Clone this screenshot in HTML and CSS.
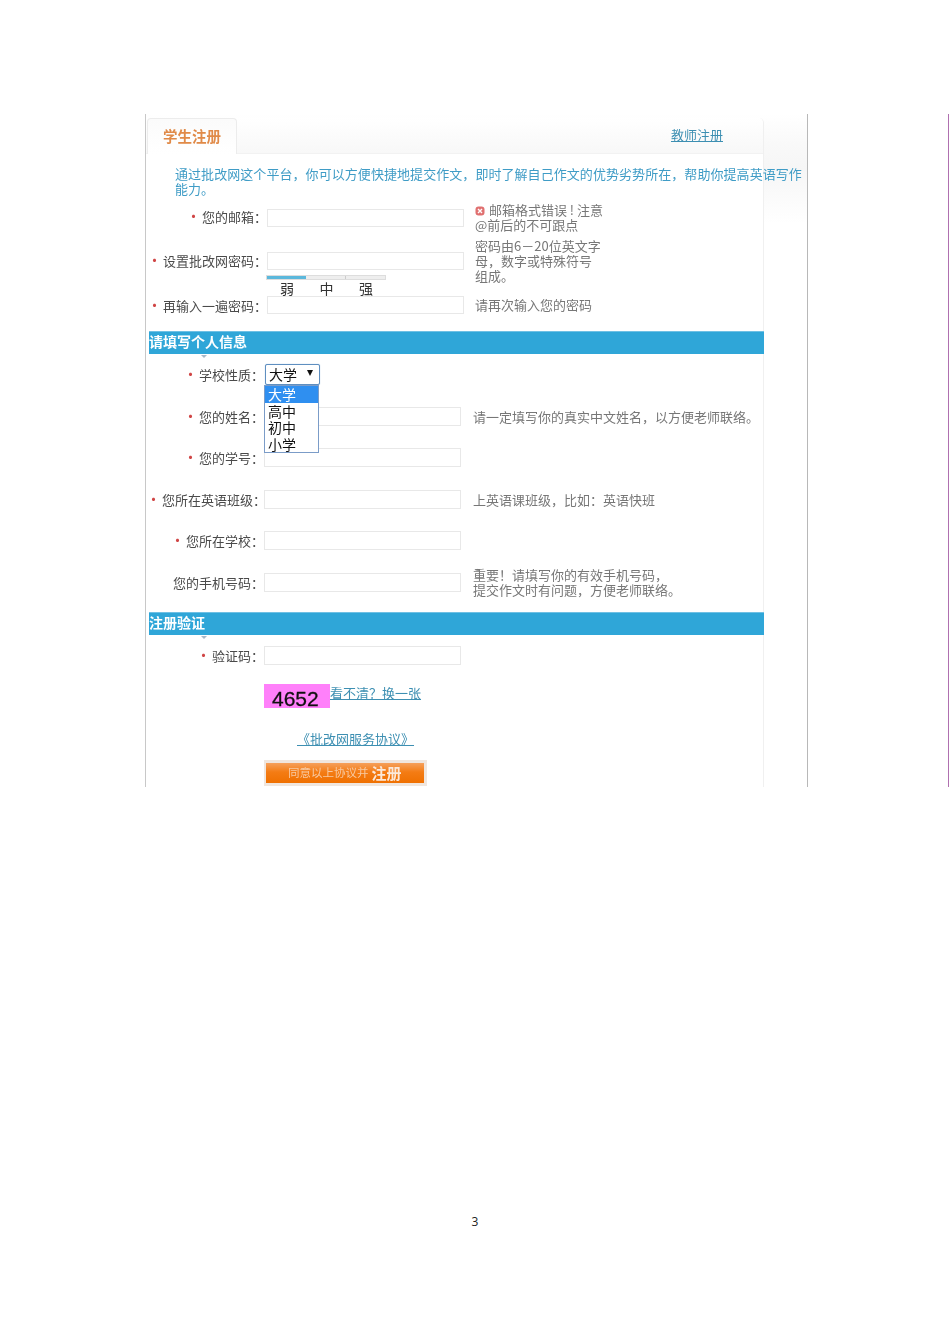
FILE: index.html
```html
<!DOCTYPE html>
<html lang="zh-CN">
<head>
<meta charset="utf-8">
<title>学生注册</title>
<link rel="stylesheet" href="styles.css">
</head>
<body>
<div class="page">
  <div class="sheet">
    <div class="shot">
      <div class="card">
        <div class="tabs">
          <div class="tab">学生注册</div>
          <a class="teacher" href="#">教师注册</a>
        </div>
        <p class="intro">通过批改网这个平台，你可以方便快捷地提交作文，即时了解自己作文的优势劣势所在，帮助你提高英语写作能力。</p>

        <div class="group-a">
          <div class="row-a row-email">
            <label class="lab"><i class="dot">•</i>您的邮箱：</label>
            <div class="inp"></div>
            <div class="hint"><svg class="err" viewBox="0 0 10 10" width="10" height="10"><rect x="0.5" y="0.5" width="9" height="9" rx="3" fill="#e07070"/><path d="M3 3l4 4M7 3l-4 4" stroke="#fff" stroke-width="1.4"/></svg> 邮箱格式错误 ! 注意<br>@前后的不可跟点</div>
          </div>
          <div class="row-a row-pass">
            <label class="lab lab-pass"><i class="dot">•</i>设置批改网密码：</label>
            <div class="field-pass">
              <div class="inp"></div>
              <div class="meter"><span class="m m-on"></span><span class="m"></span><span class="m"></span></div>
              <div class="levels"><span>弱</span><span>中</span><span>强</span></div>
            </div>
            <div class="hint">密码由6－20位英文字<br>母，数字或特殊符号<br>组成。</div>
          </div>
          <div class="row-a row-again">
            <label class="lab"><i class="dot">•</i>再输入一遍密码：</label>
            <div class="inp"></div>
            <div class="hint">请再次输入您的密码</div>
          </div>
        </div>

        <h3 class="bar bar-one">请填写个人信息</h3>

        <div class="group-b">
          <div class="row-b">
            <label class="lab"><i class="dot">•</i>学校性质：</label>
            <div class="select-wrap">
              <div class="select"><span>大学</span><b class="caret"></b></div>
              <ul class="options">
                <li class="sel">大学</li>
                <li>高中</li>
                <li>初中</li>
                <li>小学</li>
              </ul>
            </div>
          </div>
          <div class="row-b">
            <label class="lab"><i class="dot">•</i>您的姓名：</label>
            <div class="inp"></div>
            <div class="hint">请一定填写你的真实中文姓名，以方便老师联络。</div>
          </div>
          <div class="row-b">
            <label class="lab"><i class="dot">•</i>您的学号：</label>
            <div class="inp"></div>
          </div>
          <div class="row-b">
            <label class="lab"><i class="dot">•</i>您所在英语班级：</label>
            <div class="inp"></div>
            <div class="hint">上英语课班级，比如：英语快班</div>
          </div>
          <div class="row-b">
            <label class="lab"><i class="dot">•</i>您所在学校：</label>
            <div class="inp"></div>
          </div>
          <div class="row-b">
            <label class="lab">您的手机号码：</label>
            <div class="inp"></div>
            <div class="hint">重要！请填写你的有效手机号码，<br>提交作文时有问题，方便老师联络。</div>
          </div>
        </div>

        <h3 class="bar bar-two">注册验证</h3>

        <div class="row-b">
          <label class="lab"><i class="dot">•</i>验证码：</label>
          <div class="inp"></div>
        </div>

        <div class="captcha-row">
          <div class="captcha">4652</div>
          <a class="link" href="#">看不清？换一张</a>
        </div>
        <div class="agree-row"><a class="link agree" href="#">《批改网服务协议》</a></div>
        <div class="btn-wrap"><div class="btn"><span class="btn-small">同意以上协议并</span><span class="btn-big">注册</span></div></div>
      </div>
    </div>
    <div class="edge"></div>
  </div>
  <div class="pagenum">3</div>
</div>
</body>
</html>
```
FILE: styles.css
```css
* { box-sizing: border-box; }
html, body { margin: 0; padding: 0; background: #fff; }
body { font-family: "Noto Sans CJK SC", "Liberation Sans", sans-serif; font-size: 13px; line-height: 15px; color: #4a4a4a; }
.page { width: 950px; height: 1344px; padding-top: 114px; }
.sheet { display: flex; padding-left: 145px; }
.shot {
  width: 663px; height: 673px; overflow: hidden;
  border-left: 1px solid #c8c8c8; border-right: 1px solid #b8b8b8;
  background: linear-gradient(#fff, #f9f9f9 30px, #f6f6f6 55px, #fff 110px);
  filter: blur(0.3px);
}
.edge { width: 1px; height: 673px; margin-left: 140px; background: #b070b0; }
.card { width: 618px; height: 673px; margin-top: 4px; background: #fff; border-right: 1px solid #f0f0f0; border-top-right-radius: 5px; }
.tabs {
  height: 36px; display: flex; justify-content: space-between; align-items: center;
  padding-right: 40px; background: linear-gradient(#fff, #f8f8f8);
  border-bottom: 1px solid #f2f2f2; border-top-right-radius: 5px;
}
.tab {
  width: 90px; height: 36px; margin-left: 1px; padding: 9px 0 0 15px;
  font-size: 14.5px; font-weight: 700; color: #e08a48;
  background: linear-gradient(#fbfbfb, #fff);
  border: 1px solid #ececec; border-bottom: 0; border-radius: 4px 4px 0 0;
}
.teacher { color: #3d8fb2; text-decoration: underline; margin-top: -2px; }
.intro { width: 632px; margin: 12px 0 0 29px; color: #3f9cc6; letter-spacing: 0.06px; }
.group-a { margin-top: 7px; }
.row-a { display: grid; grid-template-columns: 121px 197px auto; align-items: center; }
.row-a .hint { margin-left: 11px; }
.row-email { height: 30px; }
.row-email .lab { margin-top: -3px; }
.row-email .hint { margin-top: -3px; }
.row-pass { height: 57px; align-items: start; margin-top: 6px; }
.row-pass .hint { margin-top: -1px; }
.row-again { height: 18px; }
.row-again .hint { margin-top: -2px; }
.lab { text-align: right; white-space: nowrap; color: #4a4a4a; }
.lab-pass { margin-top: 14px; }
.dot { font-style: normal; color: #d04545; font-size: 15px; line-height: 0; margin-right: 1px; }
.inp { height: 18px; background: #fff; border: 1px solid #e8e8e8; }
.field-pass { padding-top: 13px; }
.meter { display: flex; width: 120px; height: 5px; margin: 5px 0 0 -1px; background: #eee; border: 1px solid #ddd; }
.m { flex: 1; border-right: 1px solid #ccc; }
.m:last-child { border-right: 0; }
.m-on { background: #5bb8dc; border-right: 0; }
.levels { display: flex; margin-top: 1px; padding-left: 13px; height: 15px; font-size: 14px; color: #333; }
.levels span { flex: 0 0 39.5px; }
.hint { color: #777; white-space: nowrap; }
.err { vertical-align: -1px; margin-right: 1px; }
.bar { width: 615px; height: 23px; margin: 17px 0 0 3px; position: relative; background: #2fa6d8; color: #fff; font-size: 14px; line-height: 19px; font-weight: 700; border-top: 1px solid #6fc0e4; }
.bar::after { content: ""; position: absolute; left: 52px; top: 23px; border: 3px solid transparent; border-top-color: #a8b8c8; }
.bar-two { margin-top: 9px; }
.group-b { height: 249px; }
.row-b { height: 41.5px; display: grid; grid-template-columns: 118px 197px auto; align-items: center; }
.row-b .hint { margin-left: 12px; }
.row-b .inp { height: 19px; }
.select-wrap { position: relative; height: 21px; margin-left: 1px; }
.select {
  width: 55px; height: 21px; display: flex; justify-content: space-between; align-items: center;
  padding: 0 6px 0 3px; background: #fff; border: 1px solid #5f8fc0; border-radius: 2px;
  box-shadow: 0 0 1px #8ab4dc; color: #111; font-size: 14px;
}
.caret { width: 0; height: 0; margin: -3px 0 0 0; border: 3.5px solid transparent; border-top: 6px solid #111; border-bottom: 0; }
.options {
  position: absolute; left: -1px; top: 21px; z-index: 2; width: 55px; margin: 0; padding: 0;
  list-style: none; background: #fff; border: 1px solid #7b9cc8; color: #111; font-size: 14px; line-height: 16.5px;
}
.options li { padding-left: 3px; height: 16.5px; }
.options .sel { background: #2f8ff0; color: #fff; }
.captcha-row { display: flex; margin: 7.5px 0 0 118px; align-items: flex-start; }
.captcha { width: 66px; height: 24px; padding-left: 8px; background: #ff80fa; color: #111; font-family: "Liberation Sans", sans-serif; font-size: 21px; line-height: 30px; -webkit-text-stroke: 0.3px #111; }
.link { color: #3d8fb2; text-decoration: underline; }
.captcha-row .link { margin-top: 1px; }
.agree-row { margin: 22.5px 0 0 151px; }
.agree { display: inline-block; width: 118px; line-height: 16px; }
.btn-wrap { width: 163px; height: 26px; margin: 13.5px 0 0 118px; padding: 3px 3px 0 2px; background: #f0e6de; }
.btn {
  height: 20px; display: flex; align-items: center; padding: 0 0 2px 22px;
  background: linear-gradient(#f5a05c, #f47c14 45%, #ef7000); color: #fff;
}
.btn-small { font-size: 11.5px; color: #f7c9a2; margin-right: 3px; }
.btn-big { font-size: 15px; font-weight: 700; color: #fbe9da; }
.pagenum { margin-top: 427px; text-align: center; font-family: "Open Sans", "Liberation Sans", sans-serif; font-size: 12px; line-height: 16px; color: #222; }
```
